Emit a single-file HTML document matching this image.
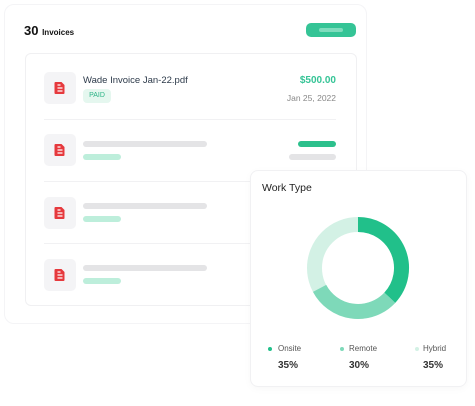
<!DOCTYPE html><html><head><style>
body{margin:0;width:475px;height:406px;background:#fff;font-family:"Liberation Sans",sans-serif;position:relative;overflow:hidden}
.a{position:absolute}
.outer{left:4px;top:4px;width:361px;height:318px;border:1px solid #f4f4f6;border-radius:10px;background:#fff}
.inner{left:25px;top:53px;width:330px;height:251px;border:1px solid #f0f0f2;border-radius:6px;background:#fff}
.ib{width:32px;height:32px;background:#f4f4f6;border-radius:5px}
.bar{height:6px;border-radius:3px}
.g{background:#e4e4e6}.lg{background:#bdeedb}.dg{background:#2cc08c}
.div{left:44px;width:292px;height:1px;background:#f1f1f3}
.card2{left:250px;top:170px;width:215px;height:215px;border:1px solid #f1f1f3;border-radius:8px;background:#fff;box-shadow:0 2px 8px rgba(0,0,0,.03)}
.leg{font-size:8px;color:#555}
.pc{font-size:10px;font-weight:bold;color:#333}
</style></head><body>
<div class="a outer"></div>
<div class="a" style="left:24px;top:23px;font-size:13px;font-weight:bold;color:#111">30 <span style="font-size:8px">Invoices</span></div>
<div class="a" style="left:306px;top:23px;width:50px;height:14px;border-radius:5px;background:#35c496"><div style="margin:5px auto 0;width:24px;height:4px;background:#7fdcbd;border-radius:2px"></div></div>
<div class="a inner"></div>
<svg width="0" height="0" style="position:absolute"><defs><g id="ic"><path d="M-4.5,-6 h6 l3,3 v8 a1,1 0 0 1 -1,1 h-8 a1,1 0 0 1 -1,-1 v-10 a1,1 0 0 1 1,-1z" fill="#e6393d"/><path d="M-2.5,-3 h3 M-2.5,0 h5 M-2.5,3 h5" stroke="#fff" stroke-width="1.2"/></g></defs></svg>
<div class="a ib" style="left:44px;top:72px"><svg width="32" height="32"><use href="#ic" x="16" y="16"/></svg></div>
<div class="a" style="left:83px;top:75px;font-size:9.5px;color:#2d3a4a">Wade Invoice Jan-22.pdf</div>
<div class="a" style="left:83px;top:89px;width:28px;height:14px;background:#e5f7ef;border-radius:4px;font-size:7px;color:#2cb486;text-align:center;line-height:14px">PAID</div>
<div class="a" style="right:139px;top:75px;font-size:10px;font-weight:bold;color:#35c496">$500.00</div>
<div class="a" style="right:139px;top:93px;font-size:8.5px;color:#888">Jan 25, 2022</div>
<div class="a div" style="top:119px"></div>
<div class="a div" style="top:181px"></div>
<div class="a div" style="top:243px"></div>
<div class="a ib" style="left:44px;top:134px"><svg width="32" height="32"><use href="#ic" x="16" y="16"/></svg></div>
<div class="a ib" style="left:44px;top:197px"><svg width="32" height="32"><use href="#ic" x="16" y="16"/></svg></div>
<div class="a ib" style="left:44px;top:259px"><svg width="32" height="32"><use href="#ic" x="16" y="16"/></svg></div>
<div class="a bar g" style="left:83px;top:141px;width:124px"></div>
<div class="a bar lg" style="left:83px;top:154px;width:38px"></div>
<div class="a bar dg" style="left:298px;top:141px;width:38px"></div>
<div class="a bar g" style="left:289px;top:154px;width:47px"></div>
<div class="a bar g" style="left:83px;top:203px;width:124px"></div>
<div class="a bar lg" style="left:83px;top:216px;width:38px"></div>
<div class="a bar g" style="left:83px;top:265px;width:124px"></div>
<div class="a bar lg" style="left:83px;top:278px;width:38px"></div>
<div class="a card2"></div>
<div class="a" style="left:262px;top:182px;font-size:10.5px;color:#222">Work Type</div>
<svg class="a" style="left:300px;top:210px" width="116" height="116" viewBox="-58 -58 116 116">
<g fill="none" stroke-width="15">
<circle r="43.5" stroke="#d3f1e5"/>
<path d="M0,-43.5 A43.5,43.5 0 0 1 31.8,29.7" stroke="#21c08a"/>
<path d="M31.8,29.7 A43.5,43.5 0 0 1 -38.4,20.4" stroke="#7ed9b9"/>
</g></svg>
<div class="a" style="left:268px;top:347px;width:4px;height:4px;border-radius:2px;background:#21c08a"></div>
<div class="a leg" style="left:278px;top:344px">Onsite</div>
<div class="a" style="left:340px;top:347px;width:4px;height:4px;border-radius:2px;background:#7ed9b9"></div>
<div class="a leg" style="left:349px;top:344px">Remote</div>
<div class="a" style="left:415px;top:347px;width:4px;height:4px;border-radius:2px;background:#d3f1e5"></div>
<div class="a leg" style="left:423px;top:344px">Hybrid</div>
<div class="a pc" style="left:278px;top:360px">35%</div>
<div class="a pc" style="left:349px;top:360px">30%</div>
<div class="a pc" style="left:423px;top:360px">35%</div>
</body></html>
